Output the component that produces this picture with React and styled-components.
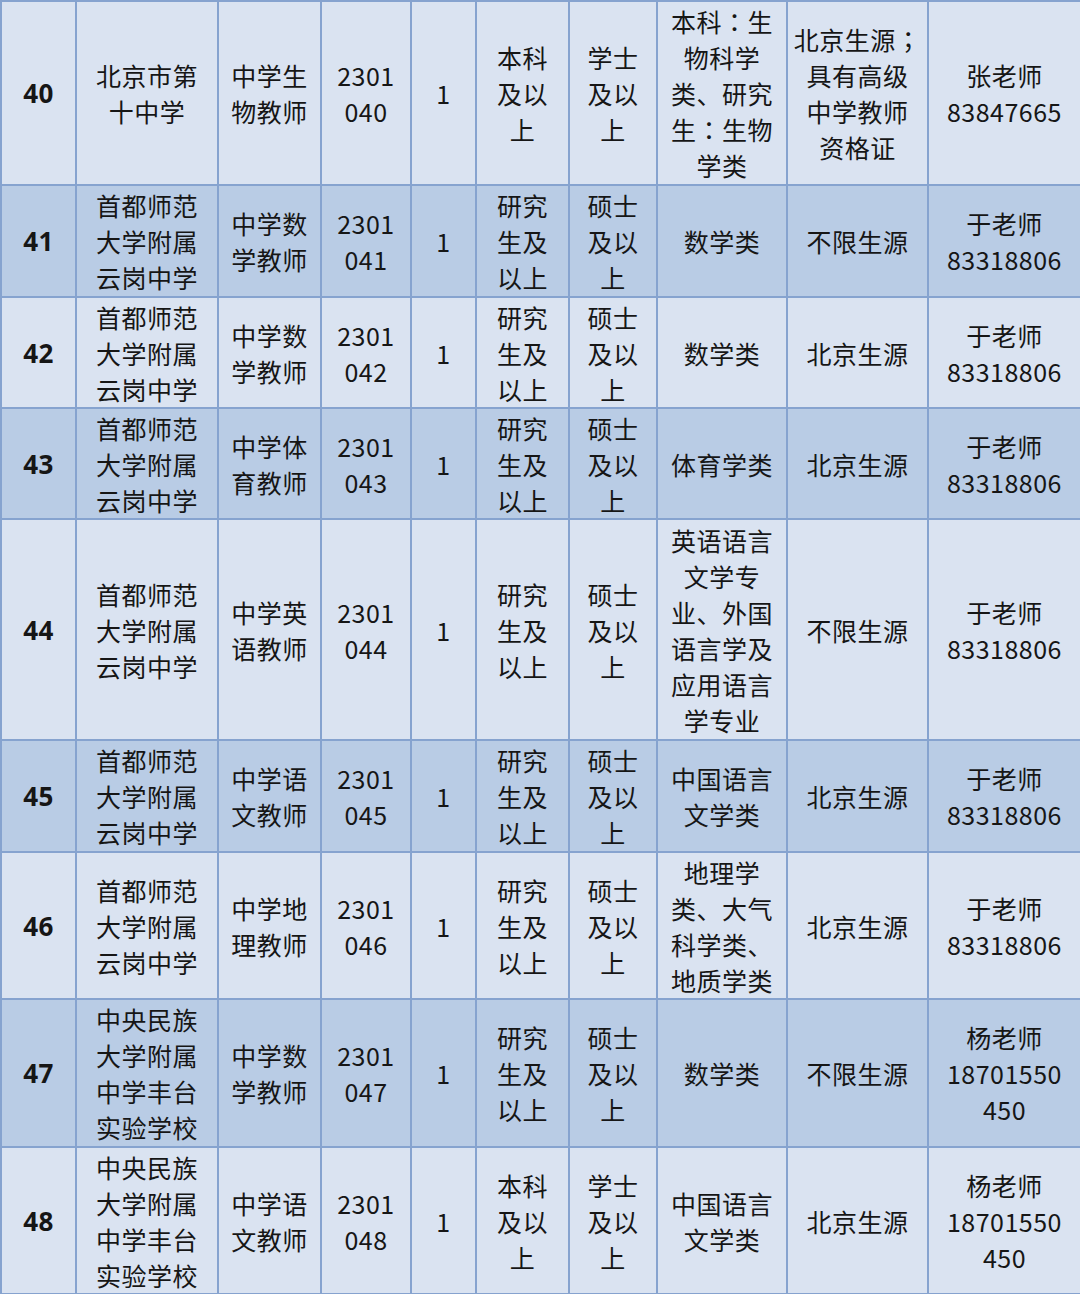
import React from "react";
import styled, { createGlobalStyle } from "styled-components";

const GlobalStyle = createGlobalStyle`
  html, body {
    margin: 0;
    padding: 0;
    background: #dae3f1;
  }
  body {
    font-family: "Noto Sans CJK SC", "Noto Sans", sans-serif;
    color: #161616;
  }
`;

const Table = styled.table`
  width: 1080px;
  border-collapse: collapse;
  table-layout: fixed;
`;

const Row = styled.tr`
  background: ${(p) => (p.$dark ? "#b9cce5" : "#dae3f1")};
  height: ${(p) => p.$h}px;
`;

const Cell = styled.td`
  border: 2px solid #86a3cf;
  padding: 0;
  text-align: center;
  vertical-align: middle;
  font-size: 25px;
  line-height: 36px;
  letter-spacing: 0.5px;
`;

const NumCell = styled(Cell)`
  font-family: "Open Sans", "Noto Sans", sans-serif;
  font-weight: 700;
  font-size: 26px;
`;

const Line = styled.div`
  white-space: nowrap;
`;

// centred full-width punctuation, as in the source sheet
const Punct = styled.span`
  font-family: "Noto Sans CJK TC", sans-serif;
`;

const widths = [75, 142, 103, 90, 65, 93, 88, 130, 141, 153];

const school = {
  shida: ["首都师范", "大学附属", "云岗中学"],
  minda: ["中央民族", "大学附属", "中学丰台", "实验学校"],
};

const grad = ["研究", "生及", "以上"];
const master = ["硕士", "及以", "上"];
const under = ["本科", "及以", "上"];
const bachelor = ["学士", "及以", "上"];
const yu = ["于老师", "83318806"];
const yang = ["杨老师", "18701550", "450"];

const rows = [
  {
    n: 40, h: 184,
    cells: [["北京市第", "十中学"], ["中学生", "物教师"], ["2301", "040"], ["1"], under, bachelor,
      ["本科：生", "物科学", "类、研究", "生：生物", "学类"],
      ["北京生源；", "具有高级", "中学教师", "资格证"], ["张老师", "83847665"]],
  },
  { n: 41, h: 112, cells: [school.shida, ["中学数", "学教师"], ["2301", "041"], ["1"], grad, master, ["数学类"], ["不限生源"], yu] },
  { n: 42, h: 111, cells: [school.shida, ["中学数", "学教师"], ["2301", "042"], ["1"], grad, master, ["数学类"], ["北京生源"], yu] },
  { n: 43, h: 111, cells: [school.shida, ["中学体", "育教师"], ["2301", "043"], ["1"], grad, master, ["体育学类"], ["北京生源"], yu] },
  {
    n: 44, h: 221,
    cells: [school.shida, ["中学英", "语教师"], ["2301", "044"], ["1"], grad, master,
      ["英语语言", "文学专", "业、外国", "语言学及", "应用语言", "学专业"], ["不限生源"], yu],
  },
  { n: 45, h: 112, cells: [school.shida, ["中学语", "文教师"], ["2301", "045"], ["1"], grad, master, ["中国语言", "文学类"], ["北京生源"], yu] },
  {
    n: 46, h: 147,
    cells: [school.shida, ["中学地", "理教师"], ["2301", "046"], ["1"], grad, master,
      ["地理学", "类、大气", "科学类、", "地质学类"], ["北京生源"], yu],
  },
  { n: 47, h: 148, cells: [school.minda, ["中学数", "学教师"], ["2301", "047"], ["1"], grad, master, ["数学类"], ["不限生源"], yang] },
  { n: 48, h: 147, cells: [school.minda, ["中学语", "文教师"], ["2301", "048"], ["1"], under, bachelor, ["中国语言", "文学类"], ["北京生源"], yang] },
];

function renderLine(t) {
  return t.split(/([：；])/).map((part, i) =>
    part === "：" || part === "；" ? <Punct key={i}>{part}</Punct> : part
  );
}

export default function App() {
  return (
    <>
      <GlobalStyle />
      <Table>
        <colgroup>
          {widths.map((w, i) => (
            <col key={i} style={{ width: w }} />
          ))}
        </colgroup>
        <tbody>
          {rows.map((r, i) => (
            <Row key={r.n} $dark={i % 2 === 1} $h={r.h}>
              <NumCell>{r.n}</NumCell>
              {r.cells.map((lines, j) => (
                <Cell key={j}>
                  {lines.map((t, k) => (
                    <Line key={k}>{renderLine(t)}</Line>
                  ))}
                </Cell>
              ))}
            </Row>
          ))}
        </tbody>
      </Table>
    </>
  );
}
